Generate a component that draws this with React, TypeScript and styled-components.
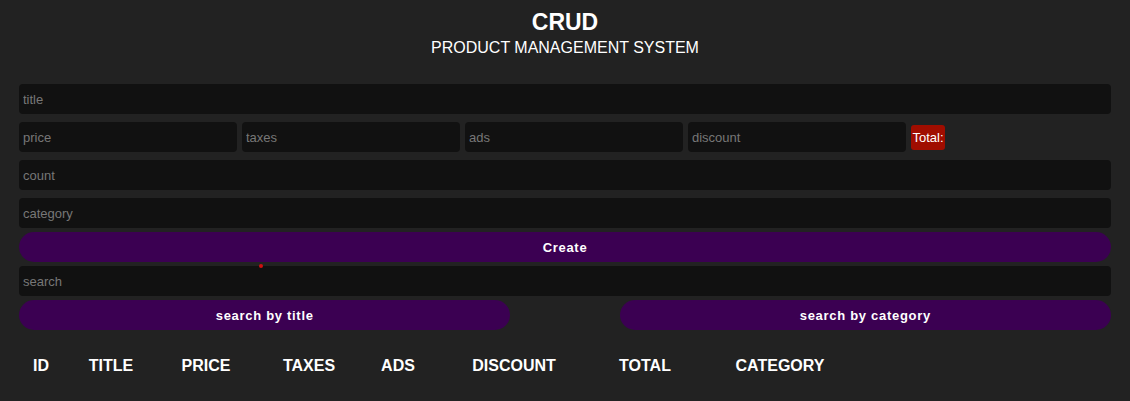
import React from "react";
import styled, { createGlobalStyle } from "styled-components";

const GlobalStyle = createGlobalStyle`
  html, body {
    margin: 0;
    padding: 0;
    background: #222222;
    color: #ffffff;
    font-family: "Liberation Sans", Arial, sans-serif;
  }
  * { box-sizing: border-box; }
`;

const Page = styled.div`
  position: relative;
  padding: 9px 19px 0;
  height: 401px;
  overflow: hidden;
`;

const Header = styled.header`
  display: flex;
  flex-direction: column;
  align-items: center;
`;

const Title = styled.h2`
  margin: 0;
  font-size: 23px;
  line-height: 26px;
  font-weight: 700;
`;

const Subtitle = styled.p`
  margin: 4px 0 0;
  font-size: 16px;
  line-height: 18px;
`;

const Form = styled.div`
  margin-top: 23px;
  display: flex;
  flex-direction: column;
`;

const Input = styled.input<{ $grow?: boolean }>`
  height: 30px;
  width: ${(p) => (p.$grow ? "218px" : "100%")};
  margin: 4px 0;
  padding: 0 4px;
  border: none;
  outline: none;
  border-radius: 4px;
  background: #111111;
  color: #ffffff;
  font-family: "Liberation Sans", Arial, sans-serif;
  font-size: 13px;
  &::placeholder { color: #777777; }
`;

const PriceRow = styled.div`
  display: flex;
  align-items: center;
  gap: 5px;
`;

const TotalBadge = styled.small`
  display: inline-block;
  margin-top: 1px;
  padding: 5px 1.5px;
  background: #a00d00;
  border-radius: 3px;
  font-size: 13px;
  line-height: 15px;
  color: #ffffff;
`;

const Button = styled.button<{ $half?: boolean }>`
  height: 30px;
  width: ${(p) => (p.$half ? "45%" : "100%")};
  border: none;
  border-radius: 15px;
  background: #3b0052;
  color: #ffffff;
  font-family: "Liberation Sans", Arial, sans-serif;
  font-size: 13px;
  font-weight: 700;
  letter-spacing: 0.7px;
  cursor: pointer;
`;

const SearchButtons = styled.div`
  display: flex;
  justify-content: space-between;
`;

const Dot = styled.span`
  position: absolute;
  left: 259px;
  top: 264px;
  width: 4px;
  height: 4px;
  border-radius: 50%;
  background: #d01010;
`;

const Table = styled.table`
  margin-top: 17px;
  border-collapse: collapse;
  table-layout: fixed;
`;

const Th = styled.th<{ $w: number }>`
  width: ${(p) => p.$w}px;
  padding: 10px 0;
  text-align: center;
  font-size: 16px;
  line-height: 18px;
  font-weight: 700;
  text-transform: uppercase;
`;

const columns: [string, number][] = [
  ["id", 44],
  ["title", 96],
  ["price", 94],
  ["taxes", 112],
  ["ads", 66],
  ["discount", 166],
  ["total", 96],
  ["category", 174],
];

export default function App() {
  return (
    <Page>
      <GlobalStyle />
      <Header>
        <Title>CRUD</Title>
        <Subtitle>PRODUCT MANAGEMENT SYSTEM</Subtitle>
      </Header>
      <Form>
        <Input placeholder="title" />
        <PriceRow>
          <Input $grow placeholder="price" />
          <Input $grow placeholder="taxes" />
          <Input $grow placeholder="ads" />
          <Input $grow placeholder="discount" />
          <TotalBadge>Total:</TotalBadge>
        </PriceRow>
        <Input placeholder="count" />
        <Input placeholder="category" />
        <Button>Create</Button>
        <Input placeholder="search" />
        <SearchButtons>
          <Button $half>search by title</Button>
          <Button $half>search by category</Button>
        </SearchButtons>
      </Form>
      <Dot />
      <Table>
        <thead>
          <tr>
            {columns.map(([name, w]) => (
              <Th key={name} $w={w}>
                {name}
              </Th>
            ))}
          </tr>
        </thead>
      </Table>
    </Page>
  );
}
